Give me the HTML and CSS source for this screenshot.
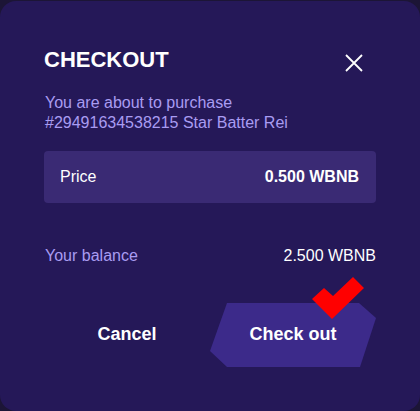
FILE: index.html
```html
<!DOCTYPE html>
<html>
<head>
<meta charset="utf-8">
<link rel="stylesheet" href="styles.css">
</head>
<body>
<div class="card">
  <div class="header">
    <h1 class="title">CHECKOUT</h1>
    <button class="close" aria-label="Close">
      <svg width="18" height="18" viewBox="0 0 18 18"><path d="M1 1L17 17M17 1L1 17" stroke="#fff" stroke-width="1.8" fill="none"/></svg>
    </button>
  </div>
  <p class="subtitle">You are about to purchase<br>#29491634538215 Star Batter Rei</p>
  <div class="price-box">
    <span class="price-label">Price</span>
    <span class="price-value">0.500 WBNB</span>
  </div>
  <div class="balance-row">
    <span class="balance-label">Your balance</span>
    <span class="balance-value">2.500 WBNB</span>
  </div>
  <div class="actions">
    <button class="btn cancel">Cancel</button>
    <div class="checkout-wrap">
      <button class="btn checkout">Check out</button>
      <svg class="tick" width="52" height="42" viewBox="0 0 52 42"><polygon points="0,22 12,11 21,19 41,0 52,11 20,42" fill="#ff0000"/></svg>
    </div>
  </div>
</div>
</body>
</html>
```
FILE: styles.css
```css
html, body {
  margin: 0;
  padding: 0;
  background: #1c1536;
}
body {
  width: 420px;
  height: 411px;
  overflow: hidden;
  font-family: "Liberation Sans", Arial, sans-serif;
}
.card {
  box-sizing: border-box;
  margin-top: 1px;
  width: 420px;
  height: 410px;
  background: #251858;
  border-radius: 16px;
  padding: 46px 44px 0 44px;
}
.header {
  display: flex;
  justify-content: space-between;
  align-items: flex-start;
}
.title {
  margin: 0;
  font-size: 22px;
  line-height: 26px;
  font-weight: 700;
  color: #ffffff;
  letter-spacing: 0;
}
.close {
  margin: 7px 13px 0 0;
  padding: 0;
  border: 0;
  background: none;
  width: 18px;
  height: 18px;
  display: block;
}
.close svg { display: block; }
.subtitle {
  margin: 20px 0 0 1px;
  font-size: 16px;
  line-height: 20px;
  color: #a99cf2;
}
.price-box {
  margin-top: 18px;
  height: 52px;
  background: #3a2a74;
  border-radius: 4px;
  display: flex;
  justify-content: space-between;
  align-items: center;
  padding: 0 17px 0 16px;
  color: #ffffff;
  font-size: 16px;
}
.price-value { font-weight: 700; }
.balance-row {
  margin-top: 43px;
  display: flex;
  justify-content: space-between;
  line-height: 20px;
  font-size: 16px;
}
.balance-label { color: #a99cf2; margin-left: 1px; }
.balance-value { color: #ffffff; }
.actions {
  margin-top: 37px;
  display: grid;
  grid-template-columns: 166px 166px;
}
.btn {
  border: 0;
  background: none;
  color: #ffffff;
  font-family: "Liberation Sans", Arial, sans-serif;
  font-weight: 700;
  font-size: 18px;
  height: 64px;
  width: 166px;
  padding: 0 0 2px 0;
}
.checkout-wrap {
  position: relative;
}
.checkout {
  display: block;
  background: #3c2a8a;
  clip-path: polygon(17px 0, 149px 0, 166px 15px, 150px 64px, 17px 64px, 0 48px);
}
.tick {
  position: absolute;
  left: 102px;
  top: -26px;
}
```
